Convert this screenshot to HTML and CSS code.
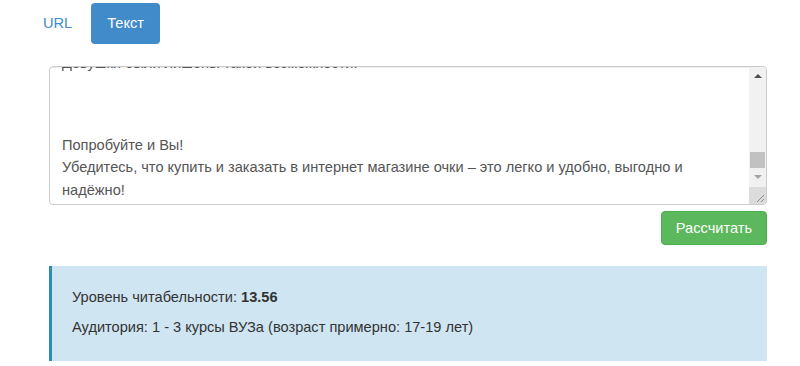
FILE: index.html
```html
<!DOCTYPE html>
<html lang="ru">

<head>
	<meta charset="UTF-8">
	<meta name="viewport" content="width=device-width, initial-scale=1.0">
	<title>Читабельность</title>
	<link rel="stylesheet" href="styles.css">
</head>

<body>
	<ul class="pills">
		<li><a href="#">URL</a></li>
		<li class="on"><a href="#">Текст</a></li>
	</ul>

	<div class="form">
		<div class="editor">
			<div class="editor-text">
				<div class="line">Девушки были лишены такой возможности!</div>
				<div class="gap"></div>
				<div class="line">Попробуйте и Вы!</div>
				<div class="line">Убедитесь, что купить и заказать в интернет магазине очки – это легко и удобно, выгодно и</div>
				<div class="line">надёжно!</div>
			</div>
			<div class="scrollbar">
				<div class="sb-btn"><span class="arrow-up"></span></div>
				<div class="sb-track"></div>
				<div class="sb-thumb"></div>
				<div class="sb-btn"><span class="arrow-down"></span></div>
				<div class="sb-corner">
					<svg width="17" height="17" viewBox="0 0 17 17">
						<line x1="15" y1="8" x2="8" y2="15" stroke="#8a8a8a" stroke-width="1" />
						<line x1="15" y1="12" x2="12" y2="15" stroke="#8a8a8a" stroke-width="1" />
					</svg>
				</div>
			</div>
		</div>

		<div class="actions">
			<button class="btn-calc">Рассчитать</button>
		</div>

		<div class="result">
			<p>Уровень читабельности: <b>13.56</b></p>
			<p>Аудитория: 1 - 3 курсы ВУЗа (возраст примерно: 17-19 лет)</p>
		</div>
	</div>
</body>

</html>
```

FILE: styles.css
```css
* {
	box-sizing: border-box;
}

body {
	margin: 0;
	background: #fff;
	font-family: "Liberation Sans", Arial, sans-serif;
	font-size: 14.6px;
	color: #333;
}

.pills {
	list-style: none;
	margin: 3px 0 0 27px;
	padding: 0;
	display: flex;
	gap: 3px;
}

.pills a {
	display: block;
	padding: 10px 16px;
	line-height: 21px;
	border-radius: 4px;
	color: #428bca;
	text-decoration: none;
}

.pills .on a {
	background-color: #428bca;
	color: #fff;
}

.form {
	margin: 22px 33px 0 49px;
}

.editor {
	display: flex;
	height: 139px;
	border: 1px solid #ccc;
	border-radius: 4px;
	overflow: hidden;
	box-shadow: inset 0 1px 1px rgba(0, 0, 0, .075);
}

.editor-text {
	flex: 1;
	display: flex;
	flex-direction: column;
	justify-content: flex-end;
	padding: 0 12px 3px 12px;
	color: #555;
	line-height: 22.5px;
	overflow: hidden;
}

.editor-text .gap {
	flex: none;
	height: 59px;
}

.line {
	flex: none;
	white-space: nowrap;
}

.scrollbar {
	width: 17px;
	display: flex;
	flex-direction: column;
	background: #f1f1f1;
}

.sb-btn {
	height: 17px;
	display: flex;
	align-items: center;
	justify-content: center;
}

.sb-track {
	flex: 1;
}

.sb-thumb {
	height: 16px;
	margin: 0 1px;
	background: #c1c1c1;
}

.arrow-up {
	border-left: 4px solid transparent;
	border-right: 4px solid transparent;
	border-bottom: 4px solid #505050;
}

.arrow-down {
	border-left: 4px solid transparent;
	border-right: 4px solid transparent;
	border-top: 4px solid #a3a3a3;
}

.sb-corner {
	height: 17px;
	margin-top: 2px;
	background: #dcdcdc;
}

.sb-corner svg {
	display: block;
}

.actions {
	display: flex;
	justify-content: flex-end;
	margin-top: 6px;
}

.btn-calc {
	font-family: inherit;
	font-size: 14.6px;
	line-height: 20px;
	padding: 6px 14px;
	height: 34px;
	color: #fff;
	background-color: #5cb85c;
	border: 1px solid #4cae4c;
	border-radius: 4px;
}

.result {
	margin-top: 21px;
	padding: 21px 22px 23px 20px;
	background-color: #cfe5f2;
	border-left: 3px solid #2a8fb0;
}

.result p {
	margin: 0 0 9px;
	line-height: 21px;
}

.result p:last-child {
	margin-bottom: 0;
}
```
